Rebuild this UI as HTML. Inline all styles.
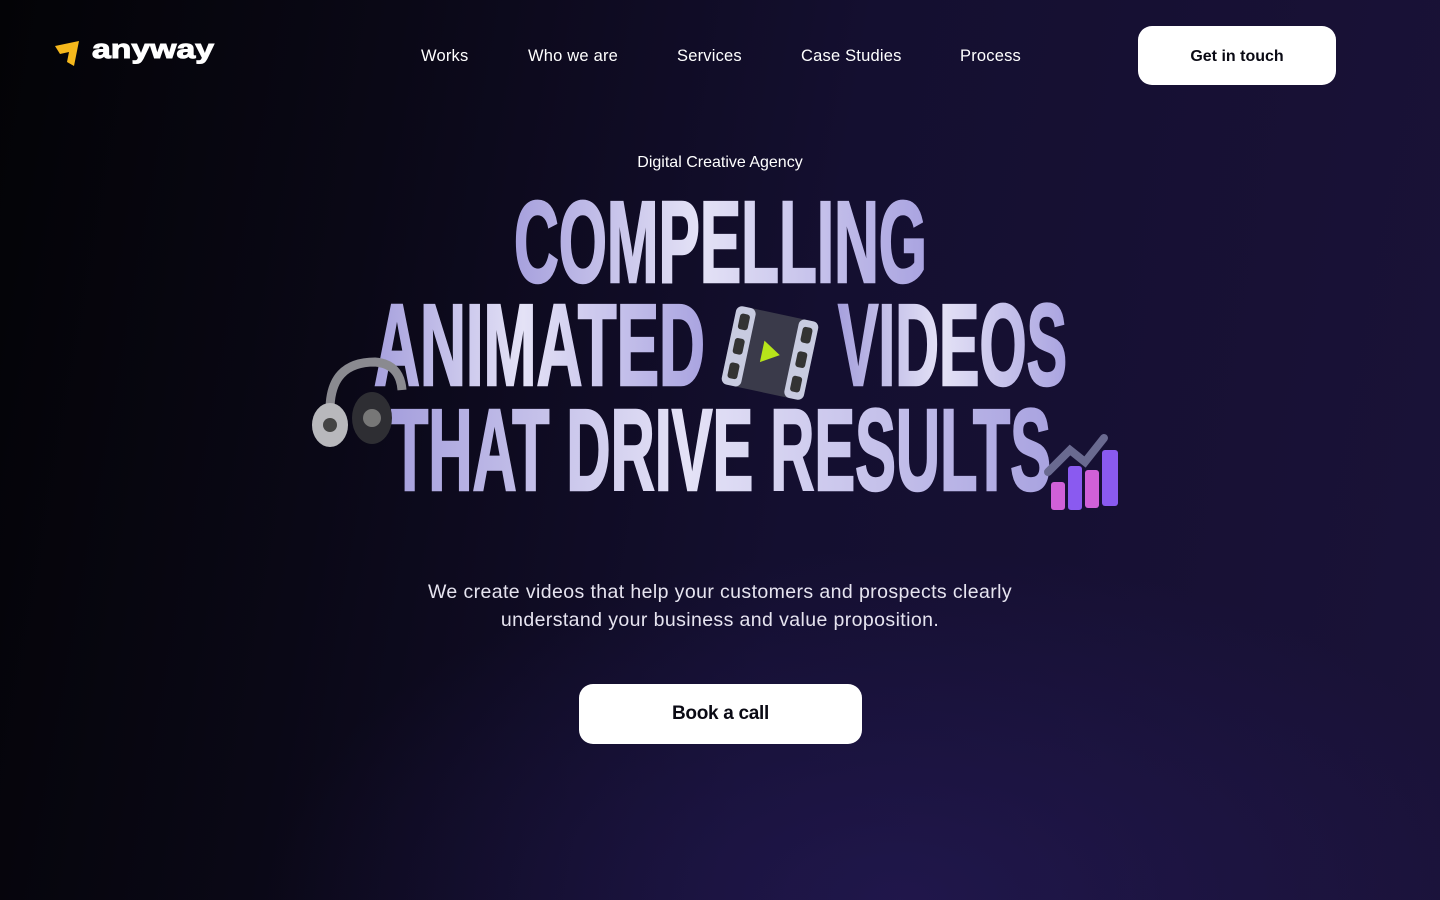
<!DOCTYPE html>
<html><head><meta charset="utf-8"><style>
*{margin:0;padding:0;box-sizing:border-box}
body{width:1440px;height:900px;overflow:hidden;font-family:"Liberation Sans",sans-serif;color:#fff;
background:linear-gradient(100deg,#030306 0%,#0a0816 25%,#140f30 55%,#1a1238 100%);position:relative}
.glow{position:absolute;inset:0;background:radial-gradient(ellipse 900px 500px at 900px 900px,rgba(40,28,95,.55),transparent 70%)}
.nav a{position:absolute;top:47px;font-size:16.5px;color:#fff;text-decoration:none;letter-spacing:0.2px}
.btn{position:absolute;background:#fff;color:#0a0a14;font-weight:bold;display:flex;align-items:center;justify-content:center;border-radius:14px}
.p{position:absolute;left:0;width:1440px;text-align:center;font-size:19.5px;line-height:28px;color:#e6e4f0;top:578px;letter-spacing:0.4px}
</style></head><body>
<div class="glow"></div>
<svg style="position:absolute;left:54px;top:40px" width="28" height="28" viewBox="0 0 28 28"><path d="M1 6 L25 1 L20 26 L13 22 L15 12 L6 14 Z" fill="#f5b81c"/></svg>
<svg style="position:absolute;left:90px;top:30px" width="130" height="40"><text x="2" y="28" font-family="Liberation Sans, sans-serif" font-weight="bold" font-size="27" fill="#fff" stroke="#fff" stroke-width="1" textLength="122" lengthAdjust="spacingAndGlyphs">anyway</text></svg>
<div class="nav"><a style="left:421px">Works</a><a style="left:528px">Who we are</a><a style="left:677px">Services</a><a style="left:801px">Case Studies</a><a style="left:960px">Process</a></div>
<div class="btn" style="left:1138px;top:26px;width:198px;height:59px;font-size:16px;padding-top:2px">Get in touch</div>
<div style="position:absolute;left:0;width:1440px;text-align:center;top:154px;font-size:16px">Digital Creative Agency</div>
<svg style="position:absolute;left:0;top:0" width="1440" height="560">
<defs><linearGradient id="g" x1="0" y1="0" x2="1" y2="0"><stop offset="0" stop-color="#a6a0dd"/><stop offset="0.45" stop-color="#e4e2f6"/><stop offset="1" stop-color="#a9a3e0"/></linearGradient></defs>
<g fill="url(#g)" stroke="url(#g)" stroke-width="2.5" font-family="Liberation Sans, sans-serif" font-weight="bold" font-size="116">
<text x="514" y="282" textLength="413" lengthAdjust="spacingAndGlyphs">COMPELLING</text>
<text x="374" y="385" textLength="331" lengthAdjust="spacingAndGlyphs">ANIMATED</text>
<text x="838" y="385" textLength="229" lengthAdjust="spacingAndGlyphs">VIDEOS</text>
<text x="391" y="490" textLength="660" lengthAdjust="spacingAndGlyphs">THAT DRIVE RESULTS</text>
</g>
<g transform="rotate(12 770 353)">
<rect x="728" y="313" width="84" height="80" rx="8" fill="#3a3a4a"/>
<rect x="728" y="313" width="20" height="80" rx="6" fill="#c8cbe0"/><rect x="792" y="313" width="20" height="80" rx="6" fill="#c8cbe0"/>
<rect x="733" y="320" width="10" height="16" rx="3" fill="#333"/><rect x="733" y="345" width="10" height="16" rx="3" fill="#333"/><rect x="733" y="370" width="10" height="16" rx="3" fill="#333"/>
<rect x="797" y="320" width="10" height="16" rx="3" fill="#333"/><rect x="797" y="345" width="10" height="16" rx="3" fill="#333"/><rect x="797" y="370" width="10" height="16" rx="3" fill="#333"/>
<path d="M762 342 L780 353 L762 364 Z" fill="#b7e51a"/></g>
<path d="M330 410 Q330 362 375 362 Q400 364 402 390" fill="none" stroke="#8a8a90" stroke-width="9"/>
<ellipse cx="330" cy="425" rx="18" ry="22" fill="#b8b8bc"/><circle cx="330" cy="425" r="7" fill="#444"/>
<ellipse cx="372" cy="418" rx="20" ry="26" fill="#2e2e33"/><circle cx="372" cy="418" r="9" fill="#777"/>
<path d="M1048 472 L1070 450 L1085 462 L1104 438" fill="none" stroke="#6a6a90" stroke-width="8" stroke-linecap="round"/>
<rect x="1051" y="482" width="14" height="28" rx="3" fill="#d060d8"/><rect x="1068" y="466" width="14" height="44" rx="3" fill="#8a5af0"/>
<rect x="1085" y="470" width="14" height="38" rx="3" fill="#d060d8"/><rect x="1102" y="450" width="16" height="56" rx="3" fill="#8a5af0"/>
</svg>
<div class="p">We create videos that help your customers and prospects clearly<br>understand your business and value proposition.</div>
<div class="btn" style="left:579px;top:684px;width:283px;height:60px;font-size:19px;letter-spacing:-0.3px">Book a call</div>
</body></html>
